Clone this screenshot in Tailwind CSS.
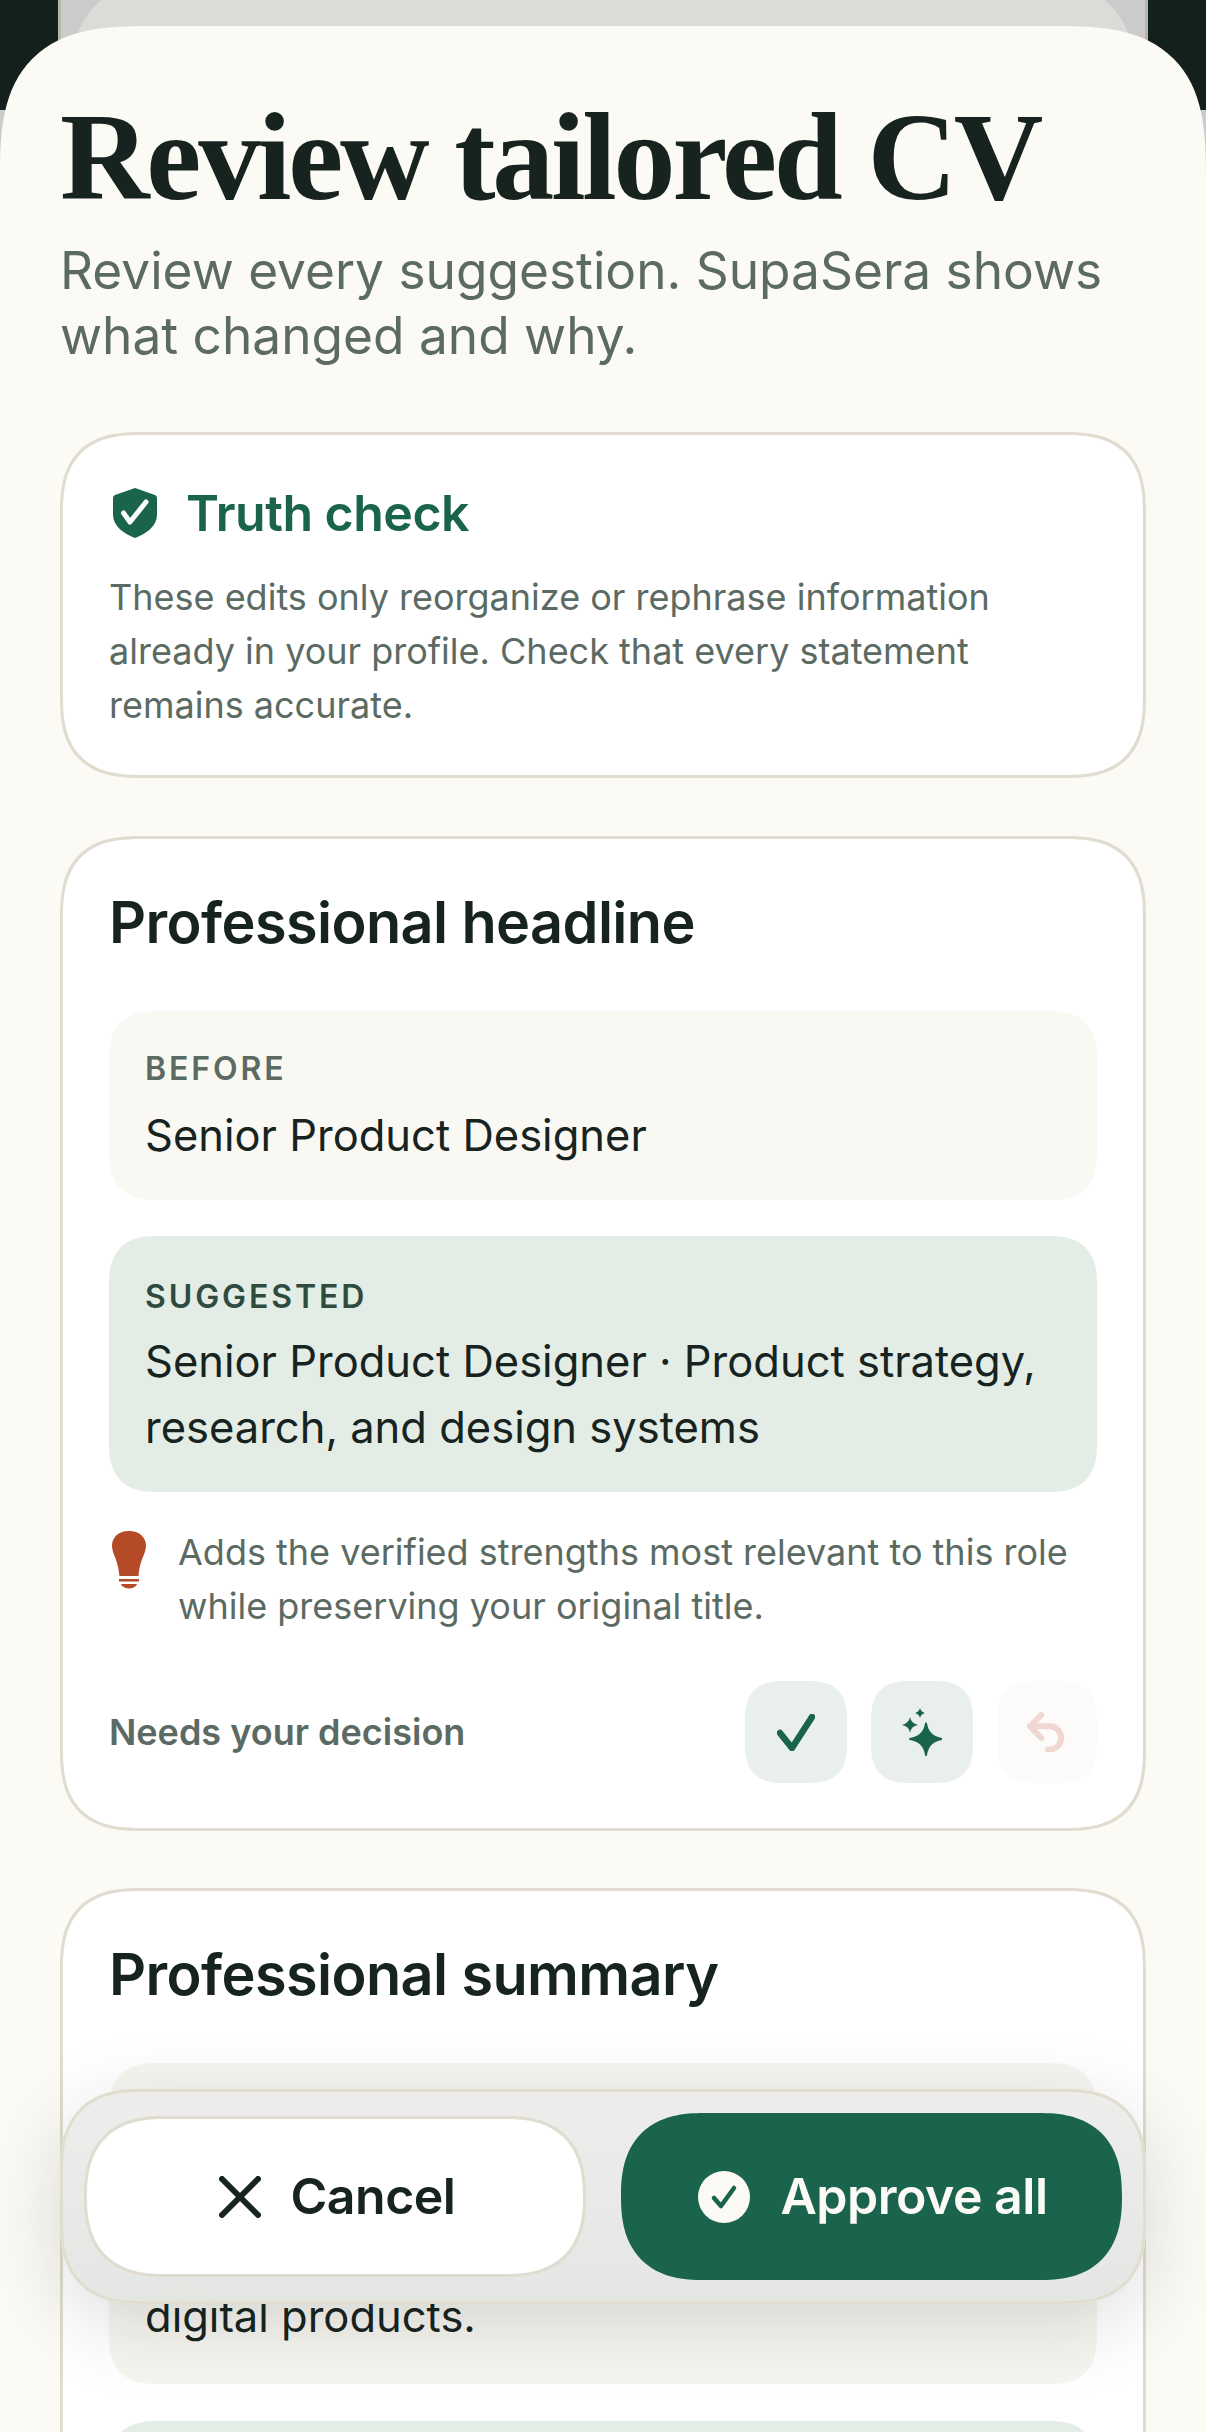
<!DOCTYPE html>
<html><head><meta charset="utf-8"><script src="https://cdn.jsdelivr.net/npm/@tailwindcss/browser@4"></script></head>
<body class="m-0">
<div class="relative w-[1206px] h-[2432px] overflow-hidden bg-[#cccccb] font-['Inter',sans-serif] text-[#17231e]">
  <div class="h-[110px] bg-[#14201b] absolute inset-x-0 top-0"></div>
  <div class="absolute left-[58px] right-[58px] top-0 h-[120px] bg-[#cbcbcb] border-x-[3px] border-[#b8b5ab]"></div>
  <div class="absolute left-[70px] right-[70px] -top-[20px] h-[140px] bg-[#dcdbd8] rounded-t-[110px] [corner-shape:superellipse(1.4)]"></div>

  <main class="relative mt-[26px] h-[2406px] bg-[#fbfaf5] rounded-t-[150px] [corner-shape:superellipse(1.5)] px-[60px] overflow-hidden">
    <h1 class="font-['Liberation_Serif',serif] font-bold text-[124px] leading-[124px] tracking-[-3.2px] text-[#17231e] pt-[70px] whitespace-nowrap">Review tailored CV</h1>
    <p class="text-[51.4px] leading-[65px] text-[#5b6a62] mt-[18px] w-[1086px]">Review every suggestion. SupaSera shows what changed and why.</p>

    <section class="mt-[64px] h-[346px] bg-white border-[3px] border-[#e0dccf] rounded-[82px] [corner-shape:superellipse(1.4)] px-[46px] pt-[46px]">
      <div class="flex items-center gap-[29px] h-[60px] mt-[2px]">
        <svg viewBox="0 0 44 50" class="w-[44px] h-[50px] ml-[4px]"><path fill="#1a634c" d="M22 0 L42 7 Q44 8 44 10 V27 C44 38 33 46 22 50 C11 46 0 38 0 27 V10 Q0 8 2 7 Z"/><path d="M10.5 25l6.5 9L33 14" fill="none" stroke="#fff" stroke-width="5" stroke-linecap="round" stroke-linejoin="round"/></svg>
        <h2 class="text-[50px] font-semibold text-[#1a634c] tracking-[-0.5px]">Truth check</h2>
      </div>
      <p class="text-[36px] leading-[54px] text-[#5b6a62] mt-[27px]">These edits only reorganize or rephrase information already in your profile. Check that every statement remains accurate.</p>
    </section>

    <section class="mt-[58px] h-[995px] bg-white border-[3px] border-[#e0dccf] rounded-[82px] [corner-shape:superellipse(1.4)] px-[46px] pt-[48px]">
      <h2 class="text-[57.6px] leading-[70px] font-semibold tracking-[-0.6px]">Professional headline</h2>
      <div class="mt-[54px] h-[189px] bg-[#faf8f3] rounded-[50px] [corner-shape:superellipse(1.4)] px-[36px] pt-[38px]">
        <div class="text-[32px] leading-[40px] font-semibold tracking-[2.9px] text-[#5b6a62]">BEFORE</div>
        <div class="text-[43.5px] leading-[65px] mt-[14px]">Senior Product Designer</div>
      </div>
      <div class="mt-[36px] h-[256px] bg-[#e3ede5] rounded-[50px] [corner-shape:superellipse(1.4)] px-[36px] pt-[41px]">
        <div class="text-[32px] leading-[40px] font-semibold tracking-[2.9px] text-[#2f4a3e]">SUGGESTED</div>
        <div class="text-[43.5px] leading-[66px] mt-[11px]">Senior Product Designer · Product strategy, research, and design systems</div>
      </div>
      <div class="mt-[39px] flex gap-[30px]">
        <svg viewBox="0 0 34 58" class="w-[34px] h-[58px] ml-[3px] shrink-0"><path fill="#b54a26" d="M17 0C27 0 34 6 34 14.5C34 23 28 28 26.5 45H7.5C6 28 0 23 0 14.5C0 6 7 0 17 0Z"/><rect x="7" y="48" width="20" height="2.5" fill="#b54a26"/><path fill="#b54a26" d="M9 53H25L24 55Q17 60 10 55Z"/></svg>
        <p class="text-[36px] leading-[54px] text-[#5b6a62] -mt-[6px] ml-[2px]">Adds the verified strengths most relevant to this role while preserving your original title.</p>
      </div>
      <div class="mt-[48px] flex items-center justify-between">
        <span class="text-[36px] font-semibold text-[#5b6a62]">Needs your decision</span>
        <div class="flex gap-[24px]">
          <button class="w-[102px] h-[102px] rounded-[40px] [corner-shape:superellipse(1.4)] bg-[#e8efec] flex items-center justify-center"><svg viewBox="0 0 38 37" class="w-[38px] h-[37px]"><path d="M3 19L15 34L35 3" fill="none" stroke="#1a634c" stroke-width="6.5" stroke-linecap="round" stroke-linejoin="round"/></svg></button>
          <button class="w-[102px] h-[102px] rounded-[40px] [corner-shape:superellipse(1.4)] bg-[#e8efec] flex items-center justify-center"><svg viewBox="0 0 40 48" class="w-[40px] h-[48px]"><path fill="#1a634c" stroke="#1a634c" stroke-width="2" stroke-linejoin="round" d="M24 15.5Q26 29 40 31Q26 33 24 47Q22 33 8 31Q22 29 24 15.5Z"/><path fill="#1a634c" d="M8 9Q9 15 16 17Q9 18 8 25Q7 18 0 17Q7 15 8 9Z"/><path fill="#1a634c" d="M18 0Q19 4 23 5Q19 6 18 10Q17 6 13 5Q17 4 18 0Z"/></svg></button>
          <button class="w-[100px] h-[102px] rounded-[40px] [corner-shape:superellipse(1.4)] bg-[#fdfbf9] flex items-center justify-center"><svg viewBox="0 0 40 40" class="w-[40px] h-[40px]"><path d="M14.3 3L3 14.3L14.3 26M3 14.3H24A11.7 11.7 0 0 1 24 37.5H21" fill="none" stroke="#f0d8d2" stroke-width="6" stroke-linecap="round" stroke-linejoin="round"/></svg></button>
        </div>
      </div>
    </section>

    <section class="mt-[57px] h-[700px] bg-white border-[3px] border-[#e0dccf] rounded-[82px] [corner-shape:superellipse(1.4)] px-[46px] pt-[48px]">
      <h2 class="text-[57.6px] leading-[70px] font-semibold tracking-[-0.6px]">Professional summary</h2>
      <div class="mt-[54px] h-[321px] bg-[#f7f5f0] rounded-[50px] [corner-shape:superellipse(1.4)] px-[36px] pt-[220px]">
        <div class="text-[43.5px] leading-[66px]">digital products.</div>
      </div>
      <div class="mt-[37px] h-[200px] bg-[#e3ede5] rounded-[50px] [corner-shape:superellipse(1.4)]"></div>
    </section>
  </main>

  <div class="absolute left-[60px] right-[60px] top-[2089px] h-[215px] rounded-[80px] [corner-shape:superellipse(1.3)] border-[3px] border-[#e0dccf]/90 bg-gradient-to-b from-[#ecedea]/95 to-[#e3e5e2]/95 backdrop-blur-xl shadow-[0_20px_80px_rgba(23,35,30,0.15)] flex items-center justify-between pl-[21px] pr-[21px]">
    <button class="w-[502px] h-[161px] rounded-[80px] [corner-shape:superellipse(1.3)] bg-white border-[3px] border-[#e0dccf] flex items-center justify-center gap-[30px] pl-[4px] text-[50px] font-semibold tracking-[-0.5px] text-[#17231e]">
      <svg viewBox="0 0 42 42" class="w-[42px] h-[42px]"><path d="M3 3L39 39M39 3L3 39" fill="none" stroke="#17231e" stroke-width="6" stroke-linecap="round"/></svg>Cancel</button>
    <button class="w-[501px] h-[167px] rounded-[83px] [corner-shape:superellipse(1.3)] bg-[#1a634c] flex items-center justify-center gap-[30px] pl-[3px] text-[50px] font-semibold tracking-[-0.5px] text-[#fbfaf5]">
      <svg viewBox="0 0 52 52" class="w-[52px] h-[52px]"><circle cx="26" cy="26" r="26" fill="#fbfaf5"/><path d="M16 27l7 8 13-18" fill="none" stroke="#1a634c" stroke-width="4.5" stroke-linecap="round" stroke-linejoin="round"/></svg>Approve all</button>
  </div>
</div>
</body></html>
